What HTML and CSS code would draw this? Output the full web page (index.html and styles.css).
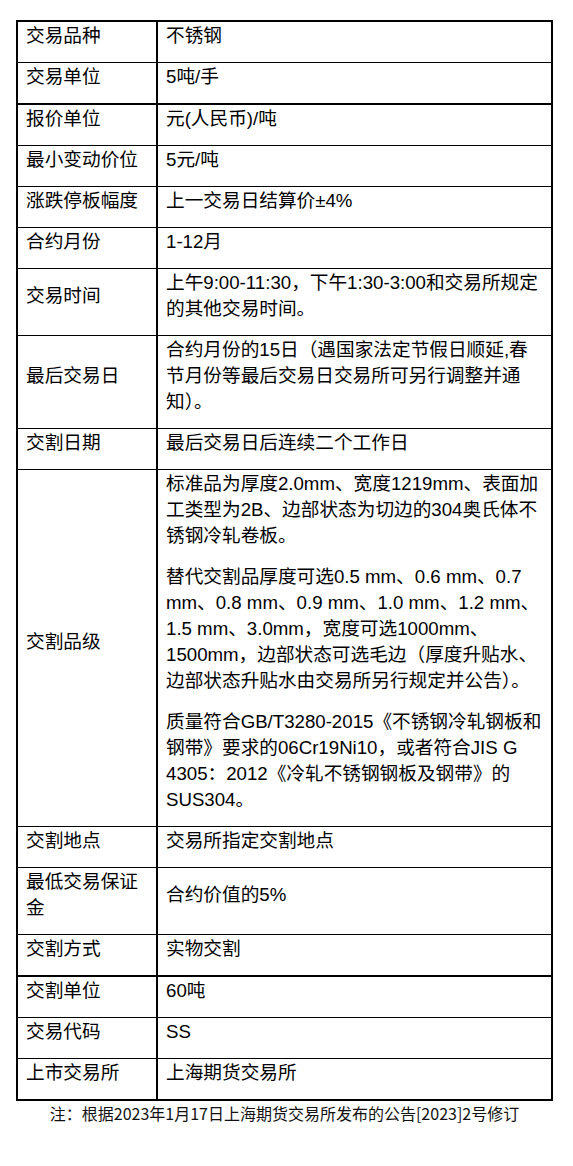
FILE: index.html
```html
<!DOCTYPE html>
<html lang="zh-CN">
<head>
<meta charset="utf-8">
<title>不锈钢期货合约</title>
<link rel="stylesheet" href="styles.css">
</head>
<body>
<div class="page">
  <div class="spec">
    <div class="cell label first"><p>交易品种</p></div>
    <div class="cell value first"><p>不锈钢</p></div>

    <div class="cell label"><p>交易单位</p></div>
    <div class="cell value"><p>5吨/手</p></div>

    <div class="cell label thick"><p>报价单位</p></div>
    <div class="cell value thick"><p>元(人民币)/吨</p></div>

    <div class="cell label"><p>最小变动价位</p></div>
    <div class="cell value"><p>5元/吨</p></div>

    <div class="cell label"><p>涨跌停板幅度</p></div>
    <div class="cell value"><p>上一交易日结算价±4%</p></div>

    <div class="cell label"><p>合约月份</p></div>
    <div class="cell value"><p>1-12月</p></div>

    <div class="cell label"><p>交易时间</p></div>
    <div class="cell value"><p>上午9:00-11:30，下午1:30-3:00和交易所规定的其他交易时间。</p></div>

    <div class="cell label"><p>最后交易日</p></div>
    <div class="cell value"><p>合约月份的15日（遇国家法定节假日顺延,春节月份等最后交易日交易所可另行调整并通知）。</p></div>

    <div class="cell label"><p>交割日期</p></div>
    <div class="cell value"><p>最后交易日后连续二个工作日</p></div>

    <div class="cell label"><p>交割品级</p></div>
    <div class="cell value">
      <div class="paras">
        <p>标准品为厚度2.0mm、宽度1219mm、表面加工类型为2B、边部状态为切边的304奥氏体不锈钢冷轧卷板。</p>
        <p>替代交割品厚度可选0.5 mm、0.6 mm、0.7 mm、0.8 mm、0.9 mm、1.0 mm、1.2 mm、1.5 mm、3.0mm，宽度可选1000mm、1500mm，边部状态可选毛边（厚度升贴水、边部状态升贴水由交易所另行规定并公告）。</p>
        <p>质量符合GB/T3280-2015《不锈钢冷轧钢板和钢带》要求的06Cr19Ni10，或者符合JIS G 4305：2012《冷轧不锈钢钢板及钢带》的SUS304。</p>
      </div>
    </div>

    <div class="cell label"><p>交割地点</p></div>
    <div class="cell value"><p>交易所指定交割地点</p></div>

    <div class="cell label"><p>最低交易保证金</p></div>
    <div class="cell value"><p>合约价值的5%</p></div>

    <div class="cell label"><p>交割方式</p></div>
    <div class="cell value"><p>实物交割</p></div>

    <div class="cell label thick"><p>交割单位</p></div>
    <div class="cell value thick"><p>60吨</p></div>

    <div class="cell label"><p>交易代码</p></div>
    <div class="cell value"><p>SS</p></div>

    <div class="cell label"><p>上市交易所</p></div>
    <div class="cell value"><p>上海期货交易所</p></div>
  </div>
  <p class="note">注：根据2023年1月17日上海期货交易所发布的公告[2023]2号修订</p>
</div>
</body>
</html>
```

FILE: styles.css
```css
* {
  box-sizing: border-box;
}

html, body {
  margin: 0;
  padding: 0;
  background: #ffffff;
}

body {
  color: #000000;
  font-family: "Liberation Sans", "Noto Sans CJK SC", sans-serif;
}

.page {
  width: 537px;
  margin: 0 0 0 16px;
  padding-top: 20px;
}

.spec {
  display: grid;
  grid-template-columns: 140px 393px;
  border: 2px solid #000000;
  font-size: 18.67px;
  line-height: 26px;
}

.cell {
  display: flex;
  align-items: center;
  border-top: 1px solid #000000;
  padding: 1px 8px;
}

.cell.first {
  border-top: 0;
}

.cell.thick {
  border-top-width: 2px;
}

.label {
  border-right: 2px solid #000000;
}

.value {
  padding-right: 6px;
}

.cell p {
  margin: 0 0 12px 0;
}

.paras {
  display: flex;
  flex-direction: column;
  gap: 2px;
  line-height: 26.2px;
}

.note {
  margin: 1px 0 0 0;
  text-align: center;
  font-family: "Noto Sans CJK SC", "Liberation Sans", sans-serif;
  font-size: 16px;
  line-height: 22px;
  color: #111111;
}
```
